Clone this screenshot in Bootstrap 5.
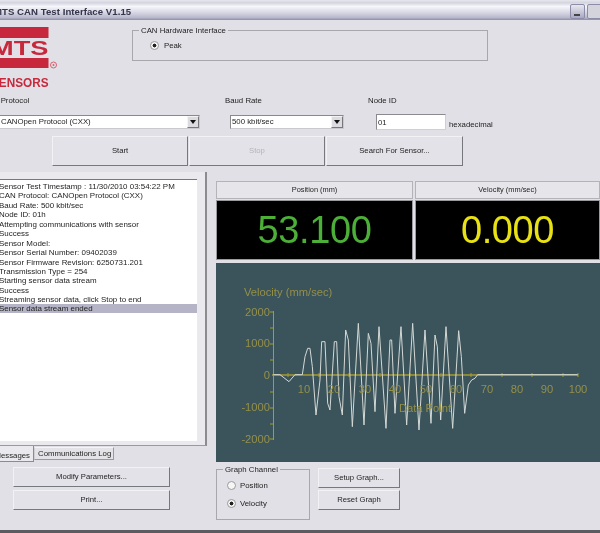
<!DOCTYPE html>
<html lang="en">
<head>
<meta charset="utf-8">
<title>MTS CAN Test Interface</title>
<link href="https://cdn.jsdelivr.net/npm/bootstrap@5.3.0/dist/css/bootstrap.min.css" rel="stylesheet">
<style>
html,body{margin:0;background:#e0e0e6;overflow:hidden}
body{font-family:"Liberation Sans",Arial,sans-serif;font-size:7.8px;line-height:1;color:#1e1e1e}
.app{width:600px;height:533px;overflow:hidden;filter:blur(.45px);position:relative}
.titlebar{height:20px;background:linear-gradient(#e6e6ee 0,#d4d4e0 14%,#f6f6fb 32%,#dcdce8 58%,#b8b8cc 88%,#8c8ca8 100%);font:bold 9.6px "Liberation Sans",sans-serif;letter-spacing:.05px;color:#34344a;padding:6px 0 0 0}
.titlebar .ttl{margin-left:-6px}
.winbtn{width:15px;height:15px;border:1px solid #8c8ca8;border-radius:2px;margin-top:-2px;background:linear-gradient(#e8e8f0,#a8a8c4);position:relative}
.winbtn.min{margin-right:2px}
.winbtn.min::after{content:"";position:absolute;left:3px;bottom:2px;width:6px;height:2px;background:#444}
.winbtn.max{background:#d4d4dc;margin-right:-2px}
.top{height:75px}
.logo{width:132px;height:75px}
.grp{border:1px solid #a8a8ac;position:relative}
.grp>.lg{position:absolute;top:-4px;left:6px;background:#e0e0e6;padding:0 2px;white-space:nowrap}
.canbox{width:356px;height:31px;margin-top:10px}
.rad{display:flex;align-items:center;gap:5px}
.rad .form-check-input{appearance:none;width:9px;height:9px;margin:0;border:1px solid #9a9a9a;border-radius:50%;background:#f6f6f6;flex:none;float:none}
.rad .form-check-input:checked{background:radial-gradient(circle,#222 0 1.7px,#f6f6f6 2.2px)}
.labels{height:12px}
.labels span{display:block;white-space:nowrap}
.labels .a{width:243px;margin-left:-18px}
.labels .b{width:143px}
.fields{height:16px;margin-top:7px}
.dd{height:14px;margin-top:1px;background:#fff;border:1px solid #cacace;border-top-color:#8a8a8e;border-left-color:#8a8a8e;display:flex;align-items:center;white-space:nowrap}
.dd .tx{flex:1;padding-left:1px;overflow:hidden}
.dd .ar{width:12px;height:12px;background:#dcdce0;border:1px solid;border-color:#f4f4f4 #77777c #77777c #f4f4f4;display:flex;align-items:center;justify-content:center}
.dd .ar::after{content:"";border-left:3px solid transparent;border-right:3px solid transparent;border-top:4px solid #111}
.dd1{width:201px;margin-left:-1px}
.dd2{width:114px;margin-left:30px}
.nodeid{width:70px;height:16px;margin-left:32px;border:1px solid #d0d0d4;border-top-color:#8a8a8e;border-left-color:#8a8a8e;border-radius:0;padding:1px 0 0 1px;font-size:7.8px;line-height:1;min-height:0;background:#fff;color:#1e1e1e}
.hexa{margin-left:3px;margin-top:7px}
.wbtn{font-size:7.7px;line-height:1;padding:0;border-radius:0;background:#e2e2e8;color:#1e1e1e;border:1px solid;border-color:#f2f2f4 #77777e #77777e #f2f2f4;display:flex;align-items:center;justify-content:center}
.wbtn:disabled{background:#e2e2e8;color:#b4b4b8;opacity:1;border-color:#f2f2f4 #77777e #77777e #f2f2f4}
.actions{margin-top:6px;margin-left:52px;gap:1px}
.actions .wbtn{height:30px;width:136px}
.main{margin-top:6px;height:358px}
.lcol{width:207px}
.tabpage{height:274px;background:#eaeaee;border-right:2px solid #8c8c90;border-bottom:1px solid #9a9a9e;padding-top:7px}
.logbox{width:197px;height:262px;background:#fff;border-top:1px solid #77777c;padding-top:2px;margin:0;border-radius:0;--bs-list-group-border-radius:0}
.logbox .list-group-item{border:0;border-radius:0;background:transparent;padding:0;margin-left:-1px;height:9.45px;line-height:9.45px;font-size:7.95px;color:#1e1e1e;white-space:nowrap}
.logbox .list-group-item.active{background:#b4b4c6;color:#1e1e1e;margin-left:0;text-indent:-1px}
.tabs{height:16px;border:0;flex-wrap:nowrap}
.tabs .nav-link{font-size:7.8px;line-height:1;border-radius:0;color:#1e1e1e;padding:0}
.tabs .t1{width:34px;height:16px;background:#eaeaee;border:0;border-right:1px solid #8c8c90;border-bottom:1px solid #8c8c90;display:flex;justify-content:flex-end;padding:6px 3px 0 0;overflow:hidden;white-space:nowrap}
.tabs .t2{width:80px;height:13px;margin-top:1px;background:#e4e4e8;border:1px solid #9a9a9e;border-top-color:#f4f4f4;border-left-color:#d0d0d4;padding:2px 0 0 3px;white-space:nowrap}
.lbtn{width:157px;height:20px;margin-left:13px}
.rcol{width:384px;margin-left:9px;padding-top:9px}
.cap{height:18px;background:#e6e6ea;border:1px solid #b4b4b8;display:flex;align-items:center;justify-content:center;font-size:7.4px}
.readout{height:60px;margin-top:1px;background:#000;border:1px solid #9a9a9e;font-size:38px;letter-spacing:-.4px;display:flex;align-items:center;justify-content:center;line-height:1}
.c1{width:197px}
.c2{width:185px;margin-left:2px}
.green{color:#4cb038}.yellow{color:#e8e214}
.graph{height:199px;background:#3b535a;margin-top:3px}
.graph svg{display:block}
.graph text{font-family:"Liberation Sans",Arial,sans-serif;font-size:11.2px;fill:#94904a}
.chanbox{width:94px;height:51px;margin-top:7px;padding:11px 0 0 10px}
.chanbox .rad{gap:4px}
.chanbox .rad+.rad{margin-top:9px}
.rbtns{margin-left:8px;margin-top:6px}
.rbtns .wbtn{width:82px;height:20px}
.rbtns .wbtn+.wbtn{margin-top:2px}
.status{position:absolute;left:0;right:0;bottom:0;height:3px;background:#5c5c60}
</style>
</head>
<body>
<div class="app">
  <div class="titlebar d-flex justify-content-between">
    <span class="ttl text-nowrap">MTS CAN Test Interface V1.15</span>
    <span class="d-flex"><span class="winbtn min"></span><span class="winbtn max"></span></span>
  </div>

  <div class="top d-flex">
    <div class="logo">
      <svg width="60" height="75" viewBox="0 20 60 75" aria-label="MTS Sensors logo">
        <rect x="0" y="27" width="48.500" height="11" fill="#c8283c"/>
        <rect x="0" y="58" width="48.500" height="10" fill="#c8283c"/>
        <text x="-9" y="55" font-family="Liberation Sans" font-weight="700" font-size="19.500" fill="#c8283c" textLength="57.500" lengthAdjust="spacingAndGlyphs">MTS</text>
        <circle cx="53.500" cy="65" r="3" fill="none" stroke="#d8606c" stroke-width="1"/>
        <circle cx="53.500" cy="65" r="1" fill="#d8606c"/>
        <text x="-9" y="87" font-family="Liberation Sans" font-weight="700" font-size="12.500" fill="#c8283c" textLength="57.500" lengthAdjust="spacingAndGlyphs">SENSORS</text>
      </svg>
    </div>
    <div class="grp canbox">
      <span class="lg">CAN Hardware Interface</span>
      <label class="rad" style="padding:10px 0 0 17px"><input class="form-check-input" type="radio" name="hw" checked> Peak</label>
    </div>
  </div>

  <div class="labels d-flex align-items-center">
    <span class="a">CAN Protocol</span><span class="b">Baud Rate</span><span>Node ID</span>
  </div>

  <div class="fields d-flex align-items-start">
    <div class="dd dd1"><span class="tx">CANOpen Protocol (CXX)</span><span class="ar"></span></div>
    <div class="dd dd2"><span class="tx">500 kbit/sec</span><span class="ar"></span></div>
    <input class="form-control nodeid" type="text" value="01">
    <span class="hexa">hexadecimal</span>
  </div>

  <div class="actions d-flex">
    <button class="btn wbtn" type="button">Start</button>
    <button class="btn wbtn" type="button" disabled>Stop</button>
    <button class="btn wbtn" type="button" style="width:137px">Search For Sensor...</button>
  </div>

  <div class="main d-flex">
    <div class="lcol">
      <div class="tabpage">
        <ul class="list-group logbox">
          <li class="list-group-item">Sensor Test Timestamp : 11/30/2010 03:54:22 PM</li>
          <li class="list-group-item">CAN Protocol: CANOpen Protocol (CXX)</li>
          <li class="list-group-item">Baud Rate: 500 kbit/sec</li>
          <li class="list-group-item">Node ID: 01h</li>
          <li class="list-group-item">Attempting communications with sensor</li>
          <li class="list-group-item">Success</li>
          <li class="list-group-item">Sensor Model:</li>
          <li class="list-group-item">Sensor Serial Number: 09402039</li>
          <li class="list-group-item">Sensor Firmware Revision: 6250731.201</li>
          <li class="list-group-item">Transmission Type = 254</li>
          <li class="list-group-item">Starting sensor data stream</li>
          <li class="list-group-item">Success</li>
          <li class="list-group-item">Streaming sensor data, click Stop to end</li>
          <li class="list-group-item active">Sensor data stream ended</li>
        </ul>
      </div>
      <div class="nav nav-tabs tabs">
        <a class="nav-link t1" href="#">Messages</a>
        <a class="nav-link t2" href="#">Communications Log</a>
      </div>
      <button class="btn wbtn lbtn" type="button" style="margin-top:5px">Modify Parameters...</button>
      <button class="btn wbtn lbtn" type="button" style="margin-top:3px">Print...</button>
    </div>

    <div class="rcol">
      <div class="d-flex">
        <div class="c1"><div class="cap">Position (mm)</div><div class="readout green">53.100</div></div>
        <div class="c2"><div class="cap">Velocity (mm/sec)</div><div class="readout yellow">0.000</div></div>
      </div>
      <div class="graph">
        <svg width="384" height="199" viewBox="216 263 384 199" role="img" aria-label="Velocity chart">
          <g stroke="#a89a30" stroke-width="1" fill="none">
            <path d="M273.500 311V440M270 312h3M270 328h3M270 344h3M270 360h3M270 392h3M270 408h3M270 424h3M270 439h3"/>
            <path d="M272 375H578" stroke-width="1.400"/>
            <path d="M288 373v4M319 373v4M349 373v4M380 373v4M410 373v4M441 373v4M471 373v4M502 373v4M532 373v4M563 373v4M578 373v4"/>
          </g>
          <polyline transform="translate(215 270) scale(.33333)" fill="none" stroke="#d4d9d6" stroke-width="3" stroke-linejoin="round"
            points="175,314 195,314 222,335 240,314 262,314 270,260 278,235 285,235 292,290 303,435 315,330 320,215 330,215 338,400 345,420 358,215 365,215 372,380 382,435 392,180 400,210 412,470 430,160 447,465 460,190 468,220 480,425 492,170 513,475 525,210 530,210 540,430 558,170 575,465 593,160 612,480 630,180 648,460 660,195 667,230 677,450 693,170 713,475 731,182 739,260 749,430 760,345 770,330 780,325 788,314 1088,314"/>
          <text x="244" y="296">Velocity (mm/sec)</text>
          <g text-anchor="end">
            <text x="270" y="316">2000</text><text x="270" y="347">1000</text><text x="270" y="379">0</text><text x="270" y="411">-1000</text><text x="270" y="443">-2000</text>
          </g>
          <g text-anchor="middle">
            <text x="304" y="393">10</text><text x="334" y="393">20</text><text x="365" y="393">30</text><text x="395" y="393">40</text><text x="426" y="393">50</text><text x="456" y="393">60</text><text x="487" y="393">70</text><text x="517" y="393">80</text><text x="547" y="393">90</text><text x="578" y="393">100</text>
            <text x="425" y="412">Data Point</text>
          </g>
        </svg>
      </div>
      <div class="d-flex">
        <div class="grp chanbox">
          <span class="lg">Graph Channel</span>
          <label class="rad"><input class="form-check-input" type="radio" name="ch"> Position</label>
          <label class="rad"><input class="form-check-input" type="radio" name="ch" checked> Velocity</label>
        </div>
        <div class="rbtns">
          <button class="btn wbtn" type="button">Setup Graph...</button>
          <button class="btn wbtn" type="button">Reset Graph</button>
        </div>
      </div>
    </div>
  </div>
  <div class="status"></div>
</div>
</body>
</html>
